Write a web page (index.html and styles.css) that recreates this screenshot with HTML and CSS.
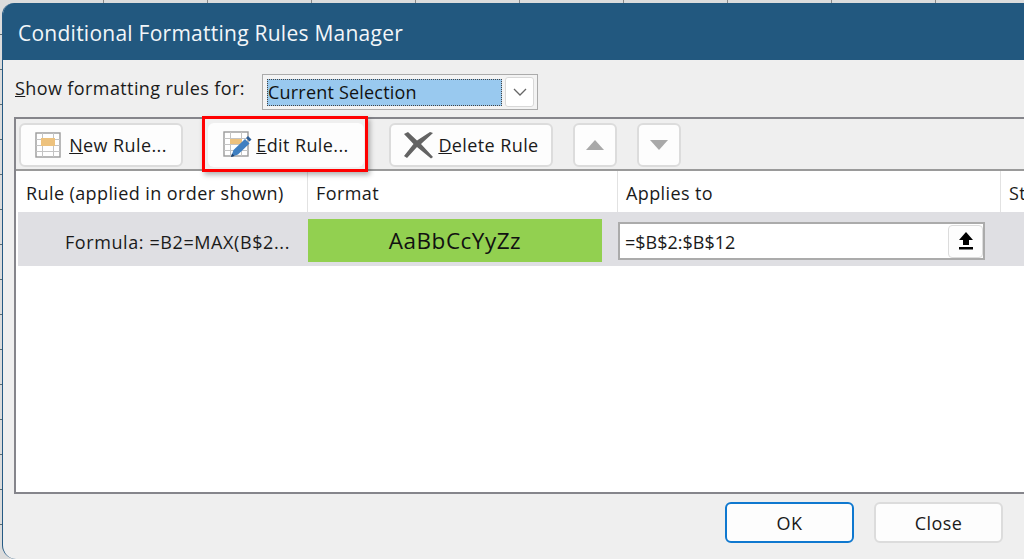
FILE: index.html
```html
<!DOCTYPE html>
<html lang="en">
<head>
<meta charset="utf-8">
<title>Conditional Formatting Rules Manager</title>
<link rel="stylesheet" href="styles.css">
</head>
<body>
<div class="dialog">
  <header class="titlebar">Conditional Formatting Rules Manager</header>
  <div class="show-row">
    <span class="show-label"><u>S</u>how formatting rules for:</span>
    <div class="combo">
      <span class="combo-value">Current Selection</span>
      <span class="combo-btn">
        <svg width="14" height="8" viewBox="0 0 14 8"><path d="M1 1l6 6 6-6" fill="none" stroke="#666" stroke-width="1.3"/></svg>
      </span>
    </div>
  </div>
  <section class="panel">
    <div class="toolbar">
      <button class="btn btn-wide btn-new">
        <svg width="26" height="26" viewBox="0 0 26 26"><rect x="1" y="1" width="24" height="24" fill="#fff" stroke="#9a9a9a" stroke-width="1.4"/><path d="M1 7.500h24M1 13.500h24M1 19.500h24M7.500 1v24M18.500 1v24" stroke="#c4c4c4" fill="none"/><rect x="6" y="6" width="14" height="8" fill="#edc27e"/></svg>
        <span><u>N</u>ew Rule...</span>
      </button>
      <button class="btn btn-edit">
        <svg width="29" height="28" viewBox="0 0 29 28"><rect x="1" y="1" width="24" height="24" fill="#fff" stroke="#9a9a9a" stroke-width="1.4"/><path d="M1 7.500h24M1 13.500h24M1 19.500h24M7.500 1v24M18.500 1v24" stroke="#c4c4c4" fill="none"/><rect x="7" y="8" width="12" height="5" fill="#edc27e"/><path d="M8 26l2.500-7L22 8l4.500 4.500L15 23.500z" fill="#3f7fc1"/><path d="M23 7l2-2 3.500 3.500-2 2z" fill="#2c5f99"/><path d="M8 26l1-3.500 2.500 2.500z" fill="#1f3f66"/></svg>
        <span><u>E</u>dit Rule...</span>
      </button>
      <button class="btn btn-wide btn-del">
        <svg width="31" height="28" viewBox="0 0 31 28"><path d="M1 3l4-2 9 8.500L27 1l3 1-12 11 12 13-2 1.500L14 16 4 27l-3-2 9.500-12z" fill="#636363"/></svg>
        <span><u>D</u>elete Rule</span>
      </button>
      <button class="btn btn-arrow" aria-label="Move up"><span class="tri tri-up"></span></button>
      <button class="btn btn-arrow" aria-label="Move down"><span class="tri tri-down"></span></button>
    </div>
    <div class="table-head">
      <div class="th">Rule (applied in order shown)</div>
      <div class="th">Format</div>
      <div class="th">Applies to</div>
      <div class="th">Stop If True</div>
    </div>
    <div class="table-row">
      <div class="rule-cell">Formula: =B2=MAX(B$2...</div>
      <div class="format-cell">AaBbCcYyZz</div>
      <div class="applies-cell">
        <span class="applies-value">=$B$2:$B$12</span>
        <span class="range-btn">
          <svg width="16" height="20" viewBox="0 0 16 20"><path d="M8 1l7 8h-4v5H5V9H1z" fill="#000"/><rect x="1" y="16" width="14" height="2.500" fill="#000"/></svg>
        </span>
      </div>
    </div>
  </section>
  <footer class="footer">
    <button class="btn btn-foot btn-ok">OK</button>
    <button class="btn btn-foot">Close</button>
  </footer>
</div>
<div class="highlight"></div>
</body>
</html>
```
FILE: styles.css
```css
html, body {
  margin: 0;
  height: 559px;
  overflow: hidden;
}
body {
  background-color: #dcdcdc;
  background-image:
    repeating-linear-gradient(90deg, transparent 0 103px, #8a8a8a 103px 104px),
    repeating-linear-gradient(0deg, transparent 0 34px, #5a6a70 34px 35px);
  font-family: "Open Sans", "Noto Sans", sans-serif;
  font-size: 18px;
  letter-spacing: 0.4px;
  color: #1a1a1a;
  position: relative;
}
.dialog {
  margin: 3px 0 0 2px;
  width: 1060px;
  height: 556px;
  background: #efefef;
  border-radius: 12px 0 0 14px;
  border-left: 1px solid #255a84;
  box-sizing: border-box;
  overflow: hidden;
}
.titlebar {
  height: 57px;
  background: #22587f;
  color: #f2f6f9;
  font-size: 21px;
  letter-spacing: 0.25px;
  line-height: 60px;
  padding-left: 16px;
  margin-left: -1px;
}
.show-row {
  display: flex;
  align-items: flex-start;
  height: 57px;
  padding: 15px 0 0 12px;
  box-sizing: border-box;
}
.show-label {
  width: 247px;
  line-height: 26px;
  white-space: nowrap;
}
.combo {
  width: 276px;
  height: 36px;
  margin-top: -1px;
  box-sizing: border-box;
  border: 1px solid #ababab;
  display: flex;
  padding: 2px 3px;
  gap: 3px;
  background: #f3f3f3;
}
.combo-value {
  width: 236px;
  height: 27px;
  margin-top: 2px;
  margin-left: 1px;
  background: #99c9ef;
  border: 1px dotted #444;
  box-sizing: border-box;
  line-height: 24px;
  color: #111;
  letter-spacing: 0.2px;
}
.combo-btn {
  width: 29px;
  height: 30px;
  background: #fff;
  border: 1px solid #d8d8d8;
  border-radius: 3px;
  box-sizing: border-box;
  display: flex;
  align-items: center;
  justify-content: center;
}
.panel {
  margin-left: 11px;
  width: 1040px;
  height: 377px;
  box-sizing: border-box;
  border: 2px solid #85858b;
  background: #fff;
}
.toolbar {
  height: 52px;
  box-sizing: border-box;
  background: #efefef;
  border-bottom: 2px solid #9a9a9a;
  display: flex;
  align-items: flex-start;
  padding: 4px 0 0 3px;
}
.btn {
  background: #fdfdfd;
  border: 2px solid #dcdcdc;
  border-radius: 6px;
  box-sizing: border-box;
  font-family: inherit;
  font-size: 18px;
  letter-spacing: 0.4px;
  color: #1a1a1a;
  height: 44px;
  padding: 0 0 1px;
  display: flex;
  align-items: center;
  justify-content: center;
  white-space: nowrap;
}
.btn svg {
  flex: none;
}
.btn-wide {
  width: 164px;
}
.btn-new {
  gap: 8px;
}
.btn-edit {
  width: 156px;
  margin-left: 25px;
  gap: 4px;
  border-color: transparent;
}
.btn-del {
  margin-left: 25px;
  gap: 4px;
}
.btn-arrow {
  width: 44px;
  margin-left: 20px;
}
.tri {
  width: 0;
  height: 0;
  border-left: 9px solid transparent;
  border-right: 9px solid transparent;
}
.tri-up {
  border-bottom: 10px solid #a9a9a9;
}
.tri-down {
  border-top: 10px solid #a9a9a9;
}
.table-head,
.table-row {
  display: grid;
}
.table-head {
  height: 41px;
  grid-template-columns: 292px 310px 383px 1fr;
}
.th {
  line-height: 44px;
  padding-left: 8px;
  border-right: 1px solid #e2e2e2;
  white-space: nowrap;
  overflow: hidden;
}
.th:first-child {
  padding-left: 10px;
}
.table-row {
  height: 54px;
  margin-left: 2px;
  background: #dfdfe3;
  grid-template-columns: 290px 310px 383px 1fr;
  grid-template-rows: 54px;
}
.rule-cell {
  line-height: 60px;
  height: 54px;
  text-align: right;
  padding-right: 18px;
  letter-spacing: 0.6px;
  white-space: nowrap;
}
.format-cell {
  margin: 7px 16px 4px 0;
  background: #92d050;
  font-size: 22.5px;
  letter-spacing: 0.5px;
  line-height: 44px;
  text-align: center;
  color: #111;
}
.applies-cell {
  margin: 10px 16px 6px 0;
  box-sizing: border-box;
  border: 2px solid #ababab;
  background: #fff;
  display: flex;
  justify-content: space-between;
  align-items: center;
}
.applies-value {
  padding-left: 5px;
  padding-top: 2px;
  letter-spacing: 0;
}
.range-btn {
  width: 35px;
  height: 33px;
  border: 1px solid #dcdcdc;
  border-radius: 4px;
  box-sizing: border-box;
  background: #fdfdfd;
  display: flex;
  align-items: center;
  justify-content: center;
}
.footer {
  display: flex;
  gap: 20px;
  padding: 8px 0 0 722px;
}
.btn-foot {
  width: 129px;
  height: 41px;
  padding: 0;
}
.btn-ok {
  border-color: #0f78cf;
}
.highlight {
  position: absolute;
  left: 202px;
  top: 116px;
  width: 160px;
  height: 50px;
  border: 3px solid #ff0000;
  box-shadow: 2px 3px 5px rgba(0, 0, 0, 0.3);
}
```
